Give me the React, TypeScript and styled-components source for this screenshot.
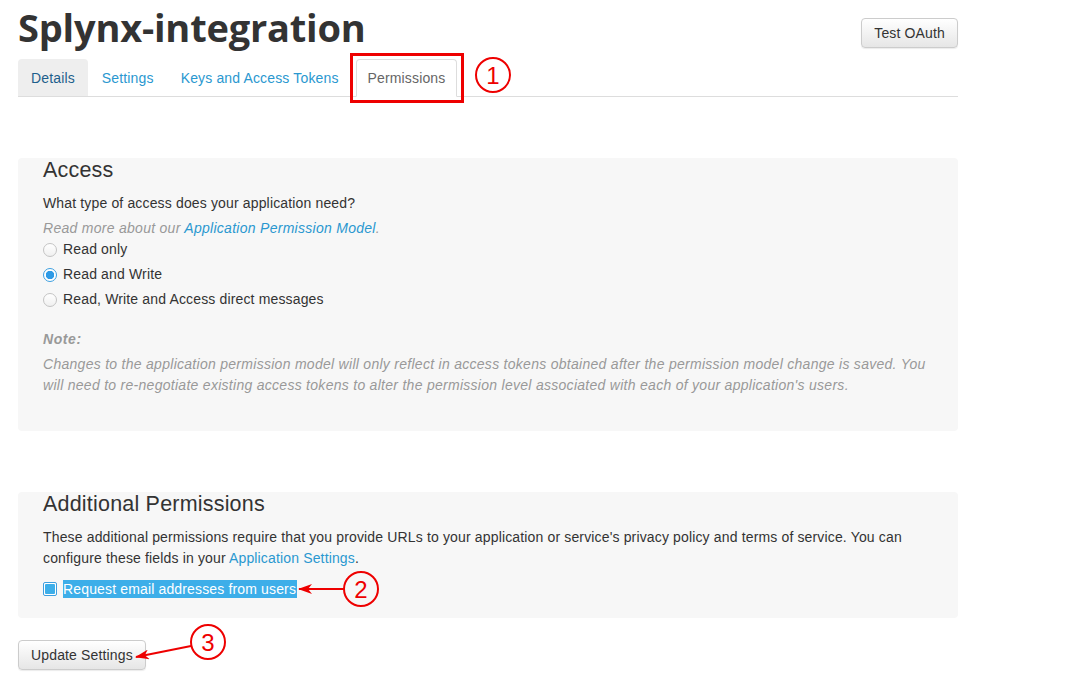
import React from "react";
import styled, { createGlobalStyle } from "styled-components";

const Global = createGlobalStyle`
  html, body { margin: 0; padding: 0; background: #fff; }
  body { font-family: "Liberation Sans", Arial, sans-serif; color: #333; font-size: 14px; letter-spacing: 0.15px; }
`;

const Page = styled.div`
  position: relative;
  width: 940px;
  padding: 0 0 0 18px;
  min-height: 696px;
`;

const Header = styled.div`
  display: flex;
  justify-content: space-between;
  align-items: flex-start;
  height: 59px;
`;

const Title = styled.h1`
  margin: 0;
  padding-top: 2px;
  font-family: "Open Sans", "Liberation Sans", sans-serif;
  font-weight: 700;
  font-size: 38px;
  line-height: 50px;
  letter-spacing: -0.2px;
  color: #333;
`;

const Button = styled.button`
  font-family: "Liberation Sans", Arial, sans-serif;
  font-size: 14px;
  letter-spacing: 0.15px;
  white-space: nowrap;
  color: #333;
  height: 30px;
  padding: 0 12px;
  border: 1px solid #ccc;
  border-radius: 4px;
  background: linear-gradient(#fff, #e6e6e6);
  box-shadow: 0 1px 1px rgba(0,0,0,0.08);
`;

const TestButton = styled(Button)`
  margin-top: 18px;
`;

const Tabs = styled.div`
  display: flex;
  height: 37px;
  border-bottom: 1px solid #ddd;
`;

type TabKind = "muted" | "link" | "active";

const tabPadding: Record<TabKind, string> = {
  muted: "0 13px",
  link: "0 13px 0 14px",
  active: "0 11px",
};

const Tab = styled.div<{ $variant: TabKind }>`
  display: flex;
  align-items: center;
  box-sizing: border-box;
  padding: ${p => tabPadding[p.$variant]};
  font-size: 14px;
  border-radius: 4px 4px 0 0;
  background: ${p => (p.$variant === "muted" ? "#eee" : p.$variant === "active" ? "#fff" : "transparent")};
  color: ${p => (p.$variant === "muted" ? "#1e5f8c" : p.$variant === "active" ? "#666" : "#2a98d0")};
  border: ${p => (p.$variant === "active" ? "1px solid #ddd" : "none")};
  border-bottom-color: #fff;
  margin-left: ${p => (p.$variant === "active" ? "4px" : "0")};
  margin-bottom: ${p => (p.$variant === "active" ? "-1px" : "0")};
  height: ${p => (p.$variant === "active" ? "38px" : "37px")};
`;

const Panel = styled.div<{ $top: number; $height: number }>`
  margin-top: ${p => p.$top}px;
  height: ${p => p.$height}px;
  box-sizing: border-box;
  background: #f7f7f7;
  border-radius: 4px;
  padding: 0 25px;
`;

const PanelTitle = styled.h2`
  margin: 0;
  font-family: "Liberation Sans", Arial, sans-serif;
  font-weight: 400;
  font-size: 21.5px;
  line-height: 25px;
  letter-spacing: 0.2px;
  color: #333;
`;

const Para = styled.p<{ $mt?: number }>`
  margin: ${p => p.$mt ?? 0}px 0 0;
  font-size: 14px;
  line-height: 21px;
  color: #333;
`;

const Muted = styled.p<{ $mt?: number; $bold?: boolean }>`
  margin: ${p => p.$mt ?? 0}px 0 0;
  font-size: 14px;
  line-height: 21px;
  font-style: italic;
  letter-spacing: ${p => (p.$bold ? "0.6px" : "0.28px")};
  font-weight: ${p => (p.$bold ? 700 : 400)};
  color: #999;
`;

const Link = styled.a`
  color: #2a98d0;
  text-decoration: none;
`;

const RadioList = styled.div`
  display: flex;
  flex-direction: column;
  margin-top: -3px;
`;

const RadioRow = styled.label`
  display: flex;
  align-items: center;
  height: 25px;
  gap: 6px;
  font-size: 14px;
  color: #333;
`;

const RadioDot = styled.span<{ $on?: boolean }>`
  width: 14px;
  height: 14px;
  box-sizing: border-box;
  border-radius: 50%;
  margin-top: 3px;
  border: 1px solid ${p => (p.$on ? "#3d9fe0" : "#c4c4c4")};
  background: ${p => (p.$on ? "radial-gradient(circle, #2e9ae6 0 4px, #fff 4.5px)" : "linear-gradient(#fff,#f0f0f0)")};
`;

const CheckRow = styled.label`
  display: flex;
  align-items: center;
  gap: 6px;
  margin-top: 11px;
  height: 18px;
`;

const CheckBox = styled.span`
  width: 14px;
  height: 14px;
  box-sizing: border-box;
  border-radius: 2px;
  border: 1px solid #3d9fe0;
  background: #fff;
  display: flex;
  align-items: center;
  justify-content: center;
  &::after {
    content: "";
    width: 10px;
    height: 10px;
    border-radius: 1px;
    background: #3daee9;
  }
`;

const Selected = styled.span`
  background: #3daee9;
  color: #fff;
  font-size: 14px;
  line-height: 18px;
  padding: 0 1px 0 0;
`;

const UpdateButton = styled(Button)`
  margin-top: 22px;
`;

const Overlay = styled.svg`
  position: absolute;
  left: 0;
  top: 0;
  pointer-events: none;
`;

const Num = styled.text`
  font-family: "Liberation Sans", Arial, sans-serif;
  font-size: 24px;
  fill: #e00;
`;

export default function App() {
  return (
    <>
      <Global />
      <Page>
        <Header>
          <Title>Splynx-integration</Title>
          <TestButton>Test OAuth</TestButton>
        </Header>
        <Tabs>
          <Tab $variant="muted">Details</Tab>
          <Tab $variant="link">Settings</Tab>
          <Tab $variant="link">Keys and Access Tokens</Tab>
          <Tab $variant="active">Permissions</Tab>
        </Tabs>

        <Panel $top={61} $height={273}>
          <PanelTitle>Access</PanelTitle>
          <Para $mt={10}>What type of access does your application need?</Para>
          <Muted $mt={4}>
            Read more about our <Link>Application Permission Model</Link>.
          </Muted>
          <RadioList>
            <RadioRow><RadioDot />Read only</RadioRow>
            <RadioRow><RadioDot $on />Read and Write</RadioRow>
            <RadioRow><RadioDot />Read, Write and Access direct messages</RadioRow>
          </RadioList>
          <Muted $bold $mt={18}>Note:</Muted>
          <Muted $mt={4}>
            Changes to the application permission model will only reflect in access tokens obtained after the permission model change is saved. You will need to re-negotiate existing access tokens to alter the permission level associated with each of your application's users.
          </Muted>
        </Panel>

        <Panel $top={61} $height={126}>
          <PanelTitle>Additional Permissions</PanelTitle>
          <Para $mt={10}>
            These additional permissions require that you provide URLs to your application or service's privacy policy and terms of service. You can configure these fields in your <Link>Application Settings</Link>.
          </Para>
          <CheckRow>
            <CheckBox />
            <Selected>Request email addresses from users</Selected>
          </CheckRow>
        </Panel>

        <UpdateButton>Update Settings</UpdateButton>

        <Overlay width="1083" height="696" viewBox="0 0 1083 696">
          <defs>
            <marker id="ah" markerWidth="14" markerHeight="10" refX="13" refY="5" orient="auto" markerUnits="userSpaceOnUse">
              <path d="M0,0 L14,5 L0,10 L4,5 Z" fill="#e00" />
            </marker>
          </defs>
          <rect x="351.5" y="54.5" width="111" height="47" fill="none" stroke="#e00" strokeWidth="3" />
          <circle cx="493" cy="75" r="17" fill="none" stroke="#e00" strokeWidth="2" />
          <Num x="493" y="84" textAnchor="middle">1</Num>
          <circle cx="361" cy="589" r="17" fill="none" stroke="#e00" strokeWidth="2" />
          <Num x="361" y="598" textAnchor="middle">2</Num>
          <line x1="344" y1="589" x2="299" y2="589" stroke="#e00" strokeWidth="2" markerEnd="url(#ah)" />
          <circle cx="208" cy="642" r="17" fill="none" stroke="#e00" strokeWidth="2" />
          <Num x="208" y="651" textAnchor="middle">3</Num>
          <line x1="191" y1="646" x2="136" y2="657" stroke="#e00" strokeWidth="2" markerEnd="url(#ah)" />
        </Overlay>
      </Page>
    </>
  );
}
